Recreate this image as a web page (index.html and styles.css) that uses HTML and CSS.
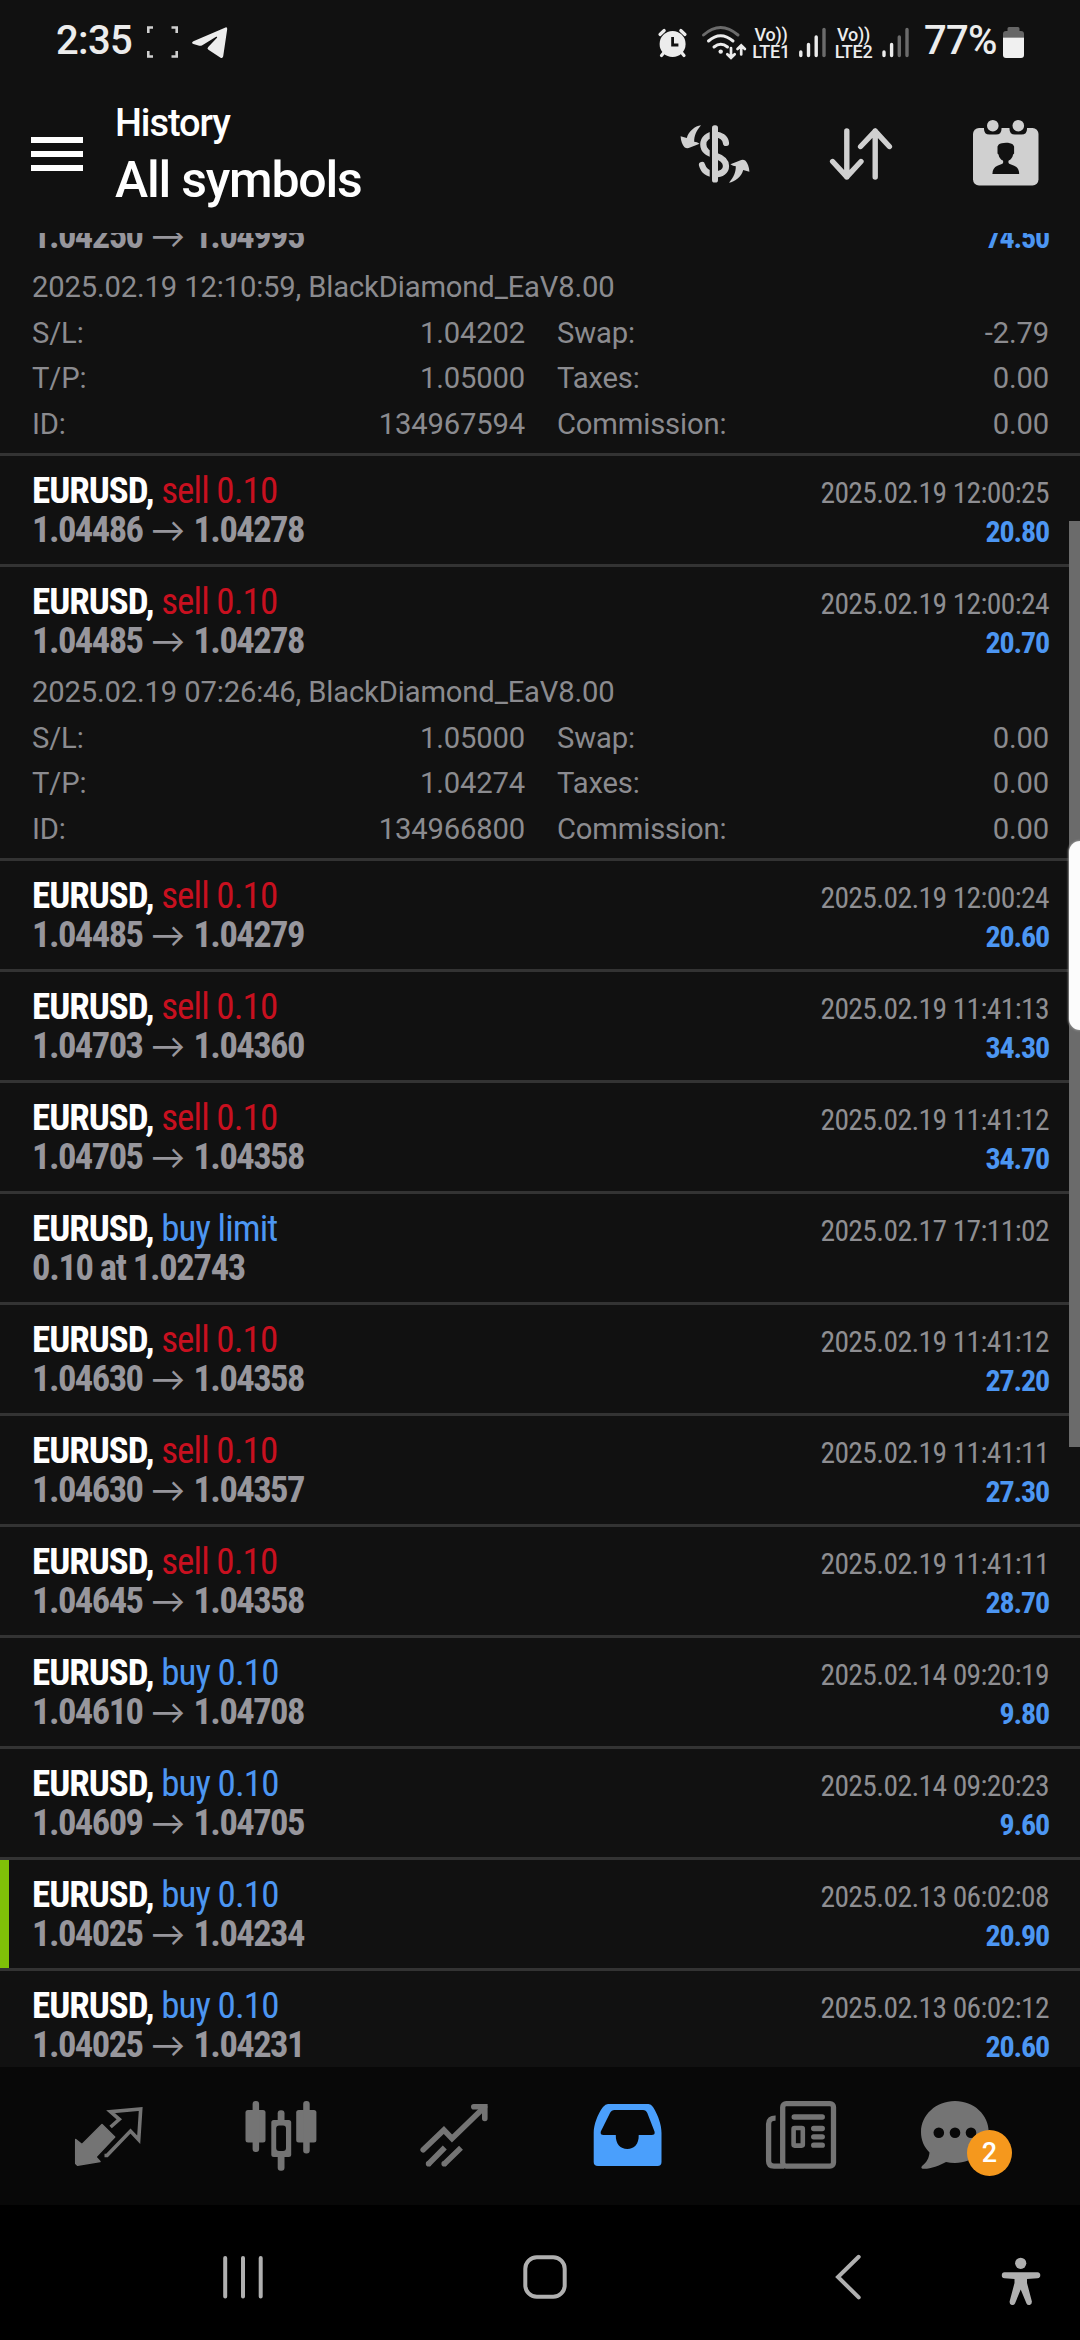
FILE: index.html
```html
<!DOCTYPE html>
<html lang="en">
<head>
<meta charset="utf-8">
<title>History</title>
<link rel="stylesheet" href="styles.css">
</head>
<body>
<div class="screen">
  <header class="top">
    <div class="status">
      <span class="clock">2:35</span>
      <svg class="ic-capture" viewBox="147 26 31 32" width="31" height="32" fill="none" stroke="#cfcfcf" stroke-width="2.6"><path d="M148.3 33V27.500H153M171.500 27.500H176.700V33M176.700 51V56.500H171.500M153 56.500H148.300V51"/></svg>
      <svg class="ic-telegram" viewBox="191 27 37 32" width="37" height="32" fill="#ececec"><path d="M225.500 27.400q2-.4 1.700 1.800l-4 27q-.6 2.700-3 1.200l-11.800-7.600q-1.800-1.300-.2-2.800l8.800-9.200q.6-1.400-.9-1l-13.800 8.500q-1.800.9-3.900.3l-5-1.600q-2.600-1.200 0-2.800z"/></svg>
      <span class="spacer"></span>
      <svg viewBox="657 25 31 33" width="31" height="33"><g fill="none" stroke="#ececec" stroke-width="3.200" stroke-linecap="round"><path d="M660 33.500l4.200-4M685 33.500l-4.200-4M664 51.500l-2.500 3M681.500 51.500l2.500 3"/></g><circle cx="672.600" cy="43" r="13" fill="#ececec"/><path d="M672.600 36v8h5.800" fill="none" stroke="#111" stroke-width="2.800"/></svg>
      <svg class="ic-wifi" viewBox="701 24 47 35" width="47" height="35" fill="none" stroke-linecap="round" stroke-width="3"><path d="M703.500 34q17-15 34.500 0" stroke="#6b6b6b"/><path d="M708.500 40q12-10.500 24.500 0M714 46q6.800-5.500 13.500 0" stroke="#ececec"/><circle cx="720.700" cy="50.600" r="2.200" fill="#ececec"/><path d="M731 47v9.500M727.300 53.200l3.700 3.600 3.700-3.600M741.200 53.500V44.500M737.500 48l3.700-3.600 3.700 3.600" stroke="#ececec" stroke-width="2.700"/></svg>
      <span class="volte"><span>Vo))</span><span>LTE1</span></span>
      <svg class="ic-sig" viewBox="799 26 27 31" width="27" height="31" stroke="#ececec" stroke-width="3.400" stroke-linecap="round"><path d="M800.800 51v3.500M808.500 43.500v11M816.200 36v18.500"/><path d="M824 28.500v26" stroke="#6b6b6b"/></svg>
      <span class="volte v2"><span>Vo))</span><span>LTE2</span></span>
      <svg class="ic-sig" viewBox="883 26 27 31" width="27" height="31" stroke="#ececec" stroke-width="3.400" stroke-linecap="round"><path d="M885 51v3.500M892.600 43.500v11"/><path d="M900.300 36v18.500M908 28.500v26" stroke="#6b6b6b"/></svg>
      <span class="clock pct">77%</span>
      <svg class="ic-bat" viewBox="1002 25 23 33" width="23" height="33"><path d="M1009 26h9q1.500 0 1.500 1.500V30h1.500q3 0 3 3v3.500h-21V33q0-3 3-3h1.500v-2.500q0-1.500 1.500-1.500z" fill="#666"/><path d="M1003 36.500h21V54q0 3-3 3h-15q-3 0-3-3z" fill="#f0f0f0"/></svg>
    </div>
    <div class="bar">
      <svg viewBox="31 136 52 36" width="52" height="36" fill="#fff"><path d="M31 137h52v6H31zM31 151h52v6H31zM31 165h52v6H31z"/></svg>
      <div class="titles"><span class="t1">History</span><span class="t2">All symbols</span></div>
      <svg class="ic-cur" viewBox="680 124 70 60" width="70" height="60"><path d="M726 143C725.500 137.500 720.500 134.600 715 134.600C708 134.600 703.300 138.500 703.300 144.500C703.300 151.500 709 153.500 715 155.500C721 157.500 726 160 726 166C726 171.500 721.500 174.200 715 174.200C708 174.200 703.500 170.500 702 165" fill="none" stroke="#d0d0d0" stroke-width="6.200" stroke-linecap="round"/><path d="M709.700 126h4v56h-4z" fill="#111"/><rect x="712" y="125.300" width="6" height="57.200" rx="2.600" fill="#d0d0d0"/><path id="a" fill="#d0d0d0" d="M701 125.300C695 126 688.500 131.500 686.800 138L680.600 136.300C680.800 141 682.500 145 684.500 147.300Q687 149 690 147.600L699.600 143.800Q697 142 694.200 141.800C694.200 135.500 696 131.500 701 125.300z"/><use href="#a" transform="rotate(180 715 154)"/></svg>
      <svg class="ic-sort" viewBox="829 127 64 54" width="64" height="54" fill="none" stroke="#d0d0d0" stroke-width="5.400" stroke-linecap="round" stroke-linejoin="round"><path d="M846.800 131v46M832.600 161.500l14.200 15.300 14.200-15.300M875.200 177v-46M860.600 146.500l14.600-15.300 14.200 15.300"/></svg>
      <svg class="ic-cal" viewBox="972 119 67 67" width="67" height="67"><rect x="973" y="128" width="65.500" height="57.400" rx="6" fill="#d0d0d0"/><path d="M984 126v3q0 5.500 5.500 5.500h6.500q5.500 0 5.500-5.500v-3zM1009.500 126v3q0 5.500 5.500 5.500h6.500q5.500 0 5.500-5.500v-3z" fill="#111"/><circle cx="992.800" cy="125.700" r="5.800" fill="#d0d0d0"/><circle cx="1018.300" cy="125.700" r="5.800" fill="#d0d0d0"/><path fill="#111" d="M992.400 174q0-6 5-8.200l5-2q1.300-1.200.5-3.200c-2.200-1.300-3.800-3-4.400-6.200l-1-1v-6.800l1.200-2c2.500-2.200 11-2.800 14.200 0l1.200 2v6.800l-1 1c-.6 3.200-2.200 4.900-4.400 6.200q-.8 2 .5 3.200l5 2q5 2.200 5 8.200z"/></svg>
    </div>
  </header>

  <main class="list">
    <section class="row open first">
      <div class="deal"><span class="px">1.04250<i>→</i>1.04995</span><span class="pl">74.50</span></div>
      <div class="info"><p>2025.02.19 12:10:59, BlackDiamond_EaV8.00</p><dl><dt>S/L:</dt><dd>1.04202</dd><dt>Swap:</dt><dd>-2.79</dd><dt>T/P:</dt><dd>1.05000</dd><dt>Taxes:</dt><dd>0.00</dd><dt>ID:</dt><dd>134967594</dd><dt>Commission:</dt><dd>0.00</dd></dl></div>
    </section>
    <section class="row"><div class="deal"><span class="sym">EURUSD, <b class="sell">sell 0.10</b></span><time>2025.02.19 12:00:25</time><span class="px">1.04486<i>→</i>1.04278</span><span class="pl">20.80</span></div></section>
    <section class="row open">
      <div class="deal"><span class="sym">EURUSD, <b class="sell">sell 0.10</b></span><time>2025.02.19 12:00:24</time><span class="px">1.04485<i>→</i>1.04278</span><span class="pl">20.70</span></div>
      <div class="info"><p>2025.02.19 07:26:46, BlackDiamond_EaV8.00</p><dl><dt>S/L:</dt><dd>1.05000</dd><dt>Swap:</dt><dd>0.00</dd><dt>T/P:</dt><dd>1.04274</dd><dt>Taxes:</dt><dd>0.00</dd><dt>ID:</dt><dd>134966800</dd><dt>Commission:</dt><dd>0.00</dd></dl></div>
    </section>
    <section class="row"><div class="deal"><span class="sym">EURUSD, <b class="sell">sell 0.10</b></span><time>2025.02.19 12:00:24</time><span class="px">1.04485<i>→</i>1.04279</span><span class="pl">20.60</span></div></section>
    <section class="row"><div class="deal"><span class="sym">EURUSD, <b class="sell">sell 0.10</b></span><time>2025.02.19 11:41:13</time><span class="px">1.04703<i>→</i>1.04360</span><span class="pl">34.30</span></div></section>
    <section class="row"><div class="deal"><span class="sym">EURUSD, <b class="sell">sell 0.10</b></span><time>2025.02.19 11:41:12</time><span class="px">1.04705<i>→</i>1.04358</span><span class="pl">34.70</span></div></section>
    <section class="row"><div class="deal"><span class="sym">EURUSD, <b class="buy">buy limit</b></span><time>2025.02.17 17:11:02</time><span class="px order">0.10 at 1.02743</span></div></section>
    <section class="row"><div class="deal"><span class="sym">EURUSD, <b class="sell">sell 0.10</b></span><time>2025.02.19 11:41:12</time><span class="px">1.04630<i>→</i>1.04358</span><span class="pl">27.20</span></div></section>
    <section class="row"><div class="deal"><span class="sym">EURUSD, <b class="sell">sell 0.10</b></span><time>2025.02.19 11:41:11</time><span class="px">1.04630<i>→</i>1.04357</span><span class="pl">27.30</span></div></section>
    <section class="row"><div class="deal"><span class="sym">EURUSD, <b class="sell">sell 0.10</b></span><time>2025.02.19 11:41:11</time><span class="px">1.04645<i>→</i>1.04358</span><span class="pl">28.70</span></div></section>
    <section class="row"><div class="deal"><span class="sym">EURUSD, <b class="buy">buy 0.10</b></span><time>2025.02.14 09:20:19</time><span class="px">1.04610<i>→</i>1.04708</span><span class="pl">9.80</span></div></section>
    <section class="row"><div class="deal"><span class="sym">EURUSD, <b class="buy">buy 0.10</b></span><time>2025.02.14 09:20:23</time><span class="px">1.04609<i>→</i>1.04705</span><span class="pl">9.60</span></div></section>
    <section class="row tp"><div class="deal"><span class="sym">EURUSD, <b class="buy">buy 0.10</b></span><time>2025.02.13 06:02:08</time><span class="px">1.04025<i>→</i>1.04234</span><span class="pl">20.90</span></div></section>
    <section class="row"><div class="deal"><span class="sym">EURUSD, <b class="buy">buy 0.10</b></span><time>2025.02.13 06:02:12</time><span class="px">1.04025<i>→</i>1.04231</span><span class="pl">20.60</span></div></section>
  </main>

  <nav class="tabs">
    <svg viewBox="70 2096 80 80" width="80" height="80"><path fill="#747474" stroke="#747474" stroke-width="1.500" stroke-linejoin="round" d="M75.700 2139.500L82 2144.500 102 2124.500 114.700 2137 95.800 2157 100 2161.500 77.500 2165.200 75.700 2163.500z"/><path fill="none" stroke="#747474" stroke-width="3.600" d="M110.600 2127L119.300 2119.300 110.500 2111.600 140.700 2109 138.700 2139.800 130.500 2131 107 2155.500 104.500 2155.500"/></svg>
    <svg viewBox="243 2096 80 80" width="80" height="80" fill="#747474"><rect x="245.500" y="2110" width="20" height="32.500" rx="2.500"/><rect x="252.600" y="2101" width="6.500" height="51" rx="3"/><rect x="296.200" y="2110" width="20.200" height="32.500" rx="2.500"/><rect x="303.200" y="2101" width="6.500" height="52.500" rx="3"/><rect x="277.700" y="2110.300" width="6.800" height="60.500" rx="3"/><rect x="271.300" y="2120" width="19.900" height="37" rx="2.500"/><rect x="276.200" y="2125.500" width="9.800" height="25.500" rx="3" fill="#080808"/></svg>
    <svg viewBox="416 2096 80 80" width="80" height="80" fill="none" stroke="#747474" stroke-width="5.600"><path stroke-linecap="round" d="M423.200 2149.800L443.900 2130 452 2138.500 484.500 2107"/><path stroke-linecap="round" d="M473.800 2106.800H484.800V2118.500"/><path d="M444.800 2147.500L428 2164.500M461 2147.800L443.700 2164.500"/><path stroke-linecap="round" d="M428.600 2163.800h.01M444.200 2163.800h.01"/></svg>
    <svg viewBox="589 2096 80 80" width="80" height="80"><path fill-rule="evenodd" fill="#4a9ffc" d="M608 2104H648.500Q651 2104 653 2107C658.500 2116 661.500 2125 661.500 2133V2162Q661.500 2166 657.500 2166H598Q593.700 2166 593.700 2162V2133C593.700 2125 597.500 2114 603 2107Q605.500 2104 608 2104zM614.500 2110Q611.500 2110 610 2113L600.800 2131.500Q600 2135 603.500 2135H615.800C615.500 2144 620.500 2149 627.300 2149S639 2144 638.700 2135H651.500Q655.500 2135 654.500 2131.500L647.300 2113Q646 2110 643 2110z"/></svg>
    <svg viewBox="762 2096 80 80" width="80" height="80" fill="none" stroke="#747474" stroke-width="5.300"><rect x="782.700" y="2103.700" width="50.800" height="62.400" rx="3.500"/><path d="M775.600 2118.200Q768.600 2118 768.600 2124V2161Q768.600 2166.100 774 2166.100H784"/><path stroke-linecap="round" d="M794.200 2117H822.300M813.700 2128.500H822.300M813.700 2136.800H822.300M813.700 2145.200H822.300"/><rect x="793.600" y="2128" width="9.200" height="17.600" rx="1" stroke-width="4.600"/></svg>
    <div class="chat">
      <svg viewBox="915 2096 80 80" width="80" height="80"><path fill="#747474" d="M955 2101C974 2101 988.700 2115 988.700 2132S974 2163 955 2163Q950 2163 946 2162C939 2166 929 2169.500 922.500 2168.700Q920.500 2168 922 2166C927 2162 929 2158 929.500 2152.500C924 2147 921 2140 921 2132C921 2115 936 2101 955 2101z"/><g fill="#080808"><circle cx="938.800" cy="2132.700" r="5.300"/><circle cx="955" cy="2132.700" r="5.300"/><circle cx="971" cy="2132.700" r="5.300"/></g></svg>
      <span class="badge">2</span>
    </div>
  </nav>

  <footer class="sys">
    <svg viewBox="218 2251 50 52" width="50" height="52" stroke="#b0b0b0" stroke-width="4" stroke-linecap="round"><path d="M225.200 2258v38.500M243 2258v38.500M260.700 2258v38.500"/></svg>
    <svg class="s2" viewBox="520 2251 50 52" width="50" height="52" fill="none" stroke="#b0b0b0" stroke-width="4"><rect x="525.300" y="2257.200" width="39.400" height="39.600" rx="11.500"/></svg>
    <svg class="s3" viewBox="824 2251 50 52" width="50" height="52" fill="none" stroke="#b0b0b0" stroke-width="4" stroke-linecap="round"><path d="M858.700 2256.800L838 2277 858.700 2297.400"/></svg>
    <svg class="s4" viewBox="996 2254 50 52" width="50" height="52" fill="#b0b0b0"><circle cx="1020.700" cy="2263.300" r="5.600"/><path d="M1004.500 2272.200H1037.500Q1040.300 2272.500 1040.300 2275.200T1037.500 2278.300L1027 2279V2283L1031.900 2301.500Q1032 2304.500 1029.700 2305T1026.500 2303.500L1020.700 2289.500 1015 2303.500Q1014 2305.500 1011.700 2305T1009.600 2301.500L1014.500 2283V2279L1004.500 2278.300Q1001.800 2278 1001.800 2275.200T1004.500 2272.200z"/></svg>
  </footer>
  <div class="scrollbar"></div>
  <div class="edge"></div>
</div>
</body>
</html>
```

FILE: styles.css
```css
* { box-sizing: border-box; margin: 0; padding: 0; }
body { background: #000; color: #fff; font-family: Roboto, "Liberation Sans", sans-serif; }
svg { display: block; flex: none; overflow: visible; }
.screen { position: relative; width: 1080px; height: 2340px; overflow: hidden; display: flex; flex-direction: column; background: #111; }

.top { height: 233px; flex: none; }
.status { height: 84px; padding: 0 55px 0 56px; display: flex; align-items: center; color: #ececec; }
.clock { font-size: 40px; font-weight: 500; line-height: 46px; letter-spacing: -.7px; margin-top: -3px; width: 76px; }
.ic-capture { margin-left: 15px; }
.ic-telegram { margin-left: 13px; margin-top: 2px; }
.spacer { flex: 1; }
.ic-wifi { margin-left: 13px; }
.volte { width: 40px; margin-left: 3px; margin-top: 2px; display: flex; flex-direction: column; font-size: 18px; line-height: 17.500px; font-weight: 500; letter-spacing: -.3px; text-align: center; white-space: nowrap; }
.v2 { width: 41px; margin-left: 7px; }
.ic-sig { margin-left: 8px; }
.pct { margin-left: 15px; width: 72px; }
.ic-bat { margin-left: 6px; }

.bar { height: 149px; padding: 0 41px 0 31px; display: flex; align-items: flex-start; }
.bar > svg { margin-top: 52px; }
.titles { margin-left: 32px; display: flex; flex-direction: column; flex: 1; font-weight: 500; }
.t1 { font-size: 38px; line-height: 44px; letter-spacing: -1.100px; margin-top: 17px; }
.t2 { font-size: 50px; line-height: 60px; letter-spacing: -1.200px; margin-top: 5px; }
.bar > .ic-cur { margin-top: 40px; }
.bar > .ic-sort { margin: 43px 79px 0; }
.bar > .ic-cal { margin-top: 35px; }

.list { height: 1834px; flex: none; overflow: hidden; display: flex; flex-direction: column; }
.row { height: 111px; flex: none; padding: 15px 32px 0; border-bottom: 3px solid #333; }
.row.open { height: 294px; }
.row.open.first { height: 240px; margin-top: -17px; padding-top: 0; }
.row.tp { background: linear-gradient(90deg, #80c008 9px, transparent 9px); }
.deal { display: grid; grid-template-columns: 1fr auto; grid-auto-rows: 39px; align-items: baseline; font-family: "Roboto Condensed", Roboto, sans-serif; line-height: 39px; }
.sym { font-size: 37px; font-weight: 700; letter-spacing: -1px; white-space: nowrap; }
.sym b { font-weight: 400; letter-spacing: -.9px; }
.sell { color: #c8101f; }
.buy { color: #4c96f2; }
.deal time { font-size: 29.500px; letter-spacing: -.600px; margin-right: -1px; color: #8e8e92; text-align: right; }
.px { font-size: 36.500px; font-weight: 700; letter-spacing: -1.550px; color: #97969c; white-space: nowrap; }
.px.order { letter-spacing: -1.300px; }
.px i { display: inline-block; width: 51px; text-align: center; font: 400 34px/30px Lato, sans-serif; letter-spacing: 0; }
.pl { font-size: 30px; font-weight: 700; letter-spacing: -1.150px; margin-right: -1px; color: #4c96f2; text-align: right; }
.info { margin-top: 10px; font-size: 29.200px; line-height: 45.600px; letter-spacing: -.15px; color: #8b8b8f; }
.info dl { display: grid; grid-template-columns: 150px 343px 202px 322px; }
.info dt:nth-of-type(even) { padding-left: 32px; }
.info dd { text-align: right; }

.tabs { height: 138px; flex: none; background: #080808; padding: 29px 0 0 70px; display: flex; align-items: flex-start; gap: 93px; }
.chat { position: relative; margin-left: -20px; }
.badge { position: absolute; left: 52px; top: 34px; width: 45px; height: 46px; border-radius: 50%; background: #f5981d; font-size: 27px; font-weight: 500; line-height: 46px; text-align: center; }

.sys { height: 135px; flex: none; background: #000; padding: 46px 34px 0 218px; display: flex; align-items: flex-start; }
.s2 { margin-left: 252px; }
.s3 { margin-left: 254px; }
.s4 { margin-left: 122px; margin-top: 3px; }

.scrollbar { position: absolute; right: 0; top: 521px; width: 11px; height: 926px; background: #6b6b6b; }
.edge { position: absolute; right: -12px; top: 841px; width: 23px; height: 189px; border-radius: 11px; background: #fcfcfc; box-shadow: 0 0 2px 1px #8a8a8a; }
```
